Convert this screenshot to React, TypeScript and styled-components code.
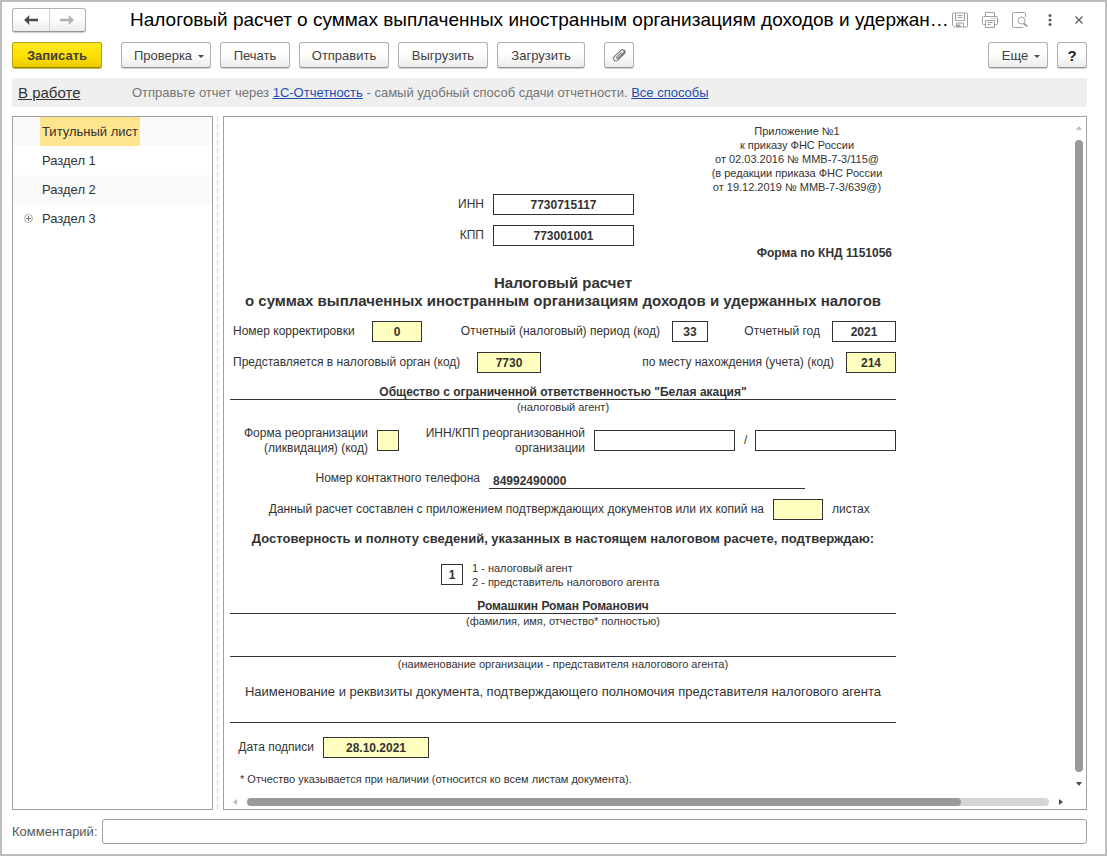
import React from "react";
import styled, { createGlobalStyle, css } from "styled-components";

const GlobalStyle = createGlobalStyle`
  *, *::before, *::after { box-sizing: border-box; }
  body {
    margin: 0;
    background: #fff;
    color: #333;
    font: 13px/15px "Liberation Sans", Arial, sans-serif;
  }
  button, input { font: inherit; color: inherit; }
`;

const Window = styled.main`
  display: flex;
  flex-direction: column;
  min-height: 100vh;
  padding: 6px 18px 10px 10px;
  border: 2px solid #bdbdbd;
`;

/* ---------- title bar ---------- */

const TitleBar = styled.header`
  display: flex;
  align-items: center;
  height: 24px;
`;

const raised = css`
  border: 1px solid #b0b0b0;
  border-bottom-color: #959595;
  border-radius: 3px;
  background: linear-gradient(#fff 40%, #ececec);
  box-shadow: 0 1px 0 #d0d0d0;
`;

const History = styled.nav`
  ${raised}
  display: flex;
  width: 74px;
  height: 24px;
  flex: none;
`;

const HistoryButton = styled.button`
  flex: 1;
  display: grid;
  place-items: center;
  padding: 0;
  border: 0;
  background: none;
  color: #4a4a4a;
  & + & {
    border-left: 1px solid #cfcfcf;
  }
  &:disabled {
    color: #b0b0b0;
  }
`;

const Title = styled.h1`
  flex: 1;
  min-width: 0;
  margin: 0 0 0 44px;
  overflow: hidden;
  color: #000;
  font-size: 19px;
  line-height: 24px;
  font-weight: 400;
  white-space: nowrap;
`;

const TitleActions = styled.div`
  display: flex;
  flex: none;
  align-items: center;
  gap: 12px;
`;

const IconButton = styled.button<{ $dark?: boolean }>`
  display: grid;
  place-items: center;
  width: 18px;
  height: 18px;
  padding: 0;
  border: 0;
  background: none;
  color: ${(p) => (p.$dark ? "#5a5a5a" : "#a0a0a0")};
  &:last-child {
    width: 16px;
  }
`;

/* ---------- command bar ---------- */

const Toolbar = styled.div`
  display: flex;
  gap: 9px;
  margin-top: 10px;
`;

const ToolButton = styled.button<{ $width?: number; $primary?: boolean; $apart?: boolean }>`
  ${raised}
  display: flex;
  align-items: center;
  justify-content: center;
  gap: 6px;
  flex: none;
  width: ${(p) => p.$width ?? 90}px;
  height: 26px;
  padding: 0;
  margin-left: ${(p) => (p.$apart ? 10 : 0)}px;
  color: #404040;
  white-space: nowrap;
  ${(p) =>
    p.$primary &&
    css`
      border-color: #b8a000;
      border-bottom-color: #978300;
      background: linear-gradient(#ffe924, #ffe100 50%, #eccb00);
      box-shadow: 0 1px 0 #c9b84e;
      font-weight: 700;
    `}
`;

const Caret = styled.span`
  border: 3px solid transparent;
  border-top-color: #4a4a4a;
  border-bottom: 0;
  margin: 2px -6px 0 0;
`;

const Spacer = styled.div`
  flex: 1;
`;

const Help = styled.b`
  color: #222;
  font-size: 15px;
`;

/* ---------- status line ---------- */

const StatusBar = styled.div`
  display: flex;
  align-items: center;
  height: 29px;
  margin-top: 10px;
  padding: 0 6px;
  background: #efefef;
  color: #757575;
`;

const StatusLink = styled.a`
  width: 114px;
  color: #333;
  font-size: 15px;
  line-height: 17px;
`;

const Link = styled.a`
  color: #1c4fb0;
`;

/* ---------- panels ---------- */

const Panels = styled.div`
  display: flex;
  flex: 1;
  margin-top: 9px;
`;

const Tree = styled.ul`
  flex: none;
  width: 201px;
  margin: 0;
  padding: 0;
  border: 1px solid #a0a0a0;
  list-style: none;
`;

const TreeRow = styled.li`
  display: flex;
  align-items: center;
  height: 29px;
  &:nth-child(odd) {
    background: #fafafa;
  }
`;

const Twisty = styled.span`
  display: grid;
  place-items: center;
  width: 27px;
  padding-left: 4px;
`;

const Expander = styled.button`
  display: grid;
  padding: 0;
  border: 0;
  background: none;
`;

const TreeItem = styled.button<{ $active?: boolean }>`
  height: 29px;
  padding: 0 2px;
  border: 0;
  background: ${(p) => (p.$active ? "#ffe48e" : "none")};
`;

const Splitter = styled.div`
  flex: none;
  width: 10px;
  background: repeating-linear-gradient(#d4d4d4 0 5px, transparent 5px 8px) 4px 0 / 1px 100% no-repeat;
`;

const Document = styled.section`
  flex: 1;
  min-width: 0;
  display: grid;
  grid-template: 1fr auto / minmax(0, 1fr) auto;
  border: 1px solid #a0a0a0;
`;

const Viewport = styled.div`
  overflow: hidden;
  padding: 7px 6px 0;
`;

const ScrollBar = styled.div<{ $vertical?: boolean }>`
  display: flex;
  align-items: center;
  gap: 10px;
  ${(p) =>
    p.$vertical
      ? css`
          flex-direction: column;
          padding: 9px 3px 9px 10px;
        `
      : css`
          padding: 3px 2px 3px 9px;
        `}
`;

const Arrow = styled.button`
  display: grid;
  padding: 0;
  border: 0;
  background: none;
  color: #4a4a4a;
  &:disabled {
    color: #bdbdbd;
  }
`;

const Track = styled.div<{ $vertical?: boolean }>`
  flex: 1;
  border-radius: 4px;
  background: #d6d6d6;
  ${(p) => (p.$vertical ? "width: 8px;" : "height: 8px;")}
`;

const Thumb = styled.div<{ $vertical?: boolean }>`
  border-radius: 4px;
  background: #9a9a9a;
  ${(p) => (p.$vertical ? "width: 8px; height: 100%;" : "height: 8px; width: 89%;")}
`;

/* ---------- form sheet ---------- */

const Sheet = styled.form`
  display: flex;
  flex-direction: column;
  max-width: 666px;
  font-size: 12px;
`;

const Appendix = styled.p`
  width: 198px;
  margin: 0 0 0 auto;
  font-size: 11px;
  line-height: 14px;
  text-align: center;
`;

const Row = styled.div<{ $cols: string; $top?: number; $height?: number; $indent?: number }>`
  display: grid;
  grid-template-columns: ${(p) => p.$cols};
  align-items: center;
  min-height: ${(p) => p.$height ?? 21}px;
  margin-top: ${(p) => p.$top ?? 0}px;
  padding-left: ${(p) => p.$indent ?? 0}px;
`;

const Label = styled.label<{ $start?: boolean; $gap?: number }>`
  padding-${(p) => (p.$start ? "left" : "right")}: ${(p) => p.$gap ?? 9}px;
  text-align: ${(p) => (p.$start ? "left" : "right")};
  white-space: nowrap;
`;

const Notes = styled.div`
  padding-left: 9px;
  font-size: 11px;
  line-height: 14px;
`;

const Field = styled.input<{ $editable?: boolean }>`
  width: 100%;
  min-width: 0;
  height: 21px;
  padding: 0;
  border: 1px solid #333;
  border-radius: 0;
  background: ${(p) => (p.$editable ? "#ffffc0" : "#fff")};
  font-weight: 700;
  text-align: center;
`;

const LineField = styled.input<{ $top?: number; $start?: boolean }>`
  width: 100%;
  min-width: 0;
  height: 16px;
  margin: ${(p) => p.$top ?? 0}px 0 0;
  padding: 0 4px;
  border: 0;
  border-bottom: 1px solid #333;
  border-radius: 0;
  background: none;
  font-weight: 700;
  text-align: ${(p) => (p.$start ? "left" : "center")};
  align-self: end;
`;

const Caption = styled.label`
  font-size: 11px;
  line-height: 14px;
  text-align: center;
`;

const FormCode = styled.p`
  margin: 0;
  padding-right: 4px;
  font-weight: 700;
  text-align: right;
`;

const Heading = styled.h2`
  margin: 13px 0 0;
  font-size: 15px;
  line-height: 18px;
  text-align: center;
`;

const Subheading = styled.h3`
  margin: 10px 0 0;
  font-size: 13px;
  line-height: 18px;
  text-align: center;
`;

const Paragraph = styled.label`
  margin-top: 12px;
  font-size: 13px;
  line-height: 18px;
  text-align: center;
`;

const Footnote = styled.p`
  margin: 14px 0 0;
  padding-left: 10px;
  font-size: 11px;
  line-height: 14px;
`;

/* ---------- comment ---------- */

const CommentRow = styled.div`
  display: flex;
  align-items: center;
  gap: 4px;
  margin-top: 9px;
  color: #555;
`;

const CommentInput = styled.input`
  flex: 1;
  min-width: 0;
  height: 25px;
  padding: 0 6px;
  border: 1px solid #a0a0a0;
  border-radius: 3px;
`;

/* ---------- drawings ---------- */

const ArrowLeft = () => (
  <svg width="14" height="10" viewBox="0 0 14 10" fill="currentColor">
    <path d="M0 5 5.500 0 5 3.700H14v2.600H5l.5 3.700z" />
  </svg>
);

const ArrowRight = () => (
  <svg width="14" height="10" viewBox="0 0 14 10" fill="currentColor">
    <path d="M14 5 8.500 0 9 3.700H0v2.600h9L8.500 10z" />
  </svg>
);

const SaveIcon = () => (
  <svg width="16" height="16" viewBox="0 0 16 16" fill="none" stroke="currentColor">
    <path d="M1.500.5h13a1 1 0 0 1 1 1v12a1 1 0 0 1-1 1h-12l-2-2v-11a1 1 0 0 1 1-1z" transform="translate(0 .5)" />
    <path d="M3.500 1v7.500h9V1M5.500 3.500h5M5.500 5.500h5M4.500 15v-4h7v4" />
    <path d="M5 12.500h3.500V15H5z" fill="currentColor" stroke="none" />
  </svg>
);

const PrintIcon = () => (
  <svg width="16" height="16" viewBox="0 0 16 16" fill="none" stroke="currentColor">
    <path d="M3.500 4.500v-4h9v4M3.500 12.500h-2a1 1 0 0 1-1-1v-6a1 1 0 0 1 1-1h13a1 1 0 0 1 1 1v6a1 1 0 0 1-1 1h-2" />
    <path d="M3.500 8.500h9v7h-9zM5.500 10.500h5M5.500 12.500h3M9.500 6.500h1M12 6.500h1.500" />
  </svg>
);

const PreviewIcon = () => (
  <svg width="16" height="16" viewBox="0 0 16 16" fill="none" stroke="currentColor">
    <path d="M13.500 5V1.500a1 1 0 0 0-1-1h-11a1 1 0 0 0-1 1v13a1 1 0 0 0 1 1H11" />
    <circle cx="9.500" cy="8.500" r="3.500" />
    <path d="m12 11.500 3 3" strokeWidth="2" />
  </svg>
);

const DotsIcon = () => (
  <svg width="4" height="12" viewBox="0 0 4 12" fill="currentColor">
    <circle cx="2" cy="1.500" r="1.500" />
    <circle cx="2" cy="6" r="1.500" />
    <circle cx="2" cy="10.500" r="1.500" />
  </svg>
);

const CloseIcon = () => (
  <svg width="8" height="8" viewBox="0 0 8 8" stroke="currentColor" strokeWidth="1.200">
    <path d="m.5.5 7 7m0-7-7 7" />
  </svg>
);

const ClipIcon = () => (
  <svg width="14" height="14" viewBox="0 0 14 14" fill="none" stroke="#777" strokeWidth="1.100" strokeLinecap="round">
    <path d="M9.300 4.600 5 8.900c-.9 1 .3 2.100 1.200 1.200l5.200-5.100c1.900-1.900-.7-4.600-2.700-2.700L2.300 8.600c-2.400 2.400 1 5.900 3.500 3.500l6.700-6.500c.8-1 .8-2.300.2-3.200" />
  </svg>
);

const PlusIcon = () => (
  <svg width="9" height="9" viewBox="0 0 9 9" fill="none">
    <circle cx="4.500" cy="4.500" r="4" stroke="#aaa" />
    <path d="M2 4.500h5M4.500 2v5" stroke="#777" />
  </svg>
);

const Triangle = ({ d, w, h }: { d: string; w: number; h: number }) => (
  <svg width={w} height={h} viewBox={`0 0 ${w} ${h}`} fill="currentColor">
    <path d={d} />
  </svg>
);

/* ---------- page ---------- */

const sections = ["Титульный лист", "Раздел 1", "Раздел 2", "Раздел 3"];

export default function App() {
  return (
    <>
      <GlobalStyle />
      <Window>
        <TitleBar>
          <History aria-label="История">
            <HistoryButton aria-label="Назад"><ArrowLeft /></HistoryButton>
            <HistoryButton aria-label="Вперед" disabled><ArrowRight /></HistoryButton>
          </History>
          <Title>Налоговый расчет о суммах выплаченных иностранным организациям доходов и удержан…</Title>
          <TitleActions>
            <IconButton aria-label="Сохранить"><SaveIcon /></IconButton>
            <IconButton aria-label="Напечатать"><PrintIcon /></IconButton>
            <IconButton aria-label="Просмотр"><PreviewIcon /></IconButton>
            <IconButton aria-label="Меню" $dark><DotsIcon /></IconButton>
            <IconButton aria-label="Закрыть" $dark><CloseIcon /></IconButton>
          </TitleActions>
        </TitleBar>

        <Toolbar>
          <ToolButton $primary>Записать</ToolButton>
          <ToolButton $apart>Проверка<Caret /></ToolButton>
          <ToolButton $width={70}>Печать</ToolButton>
          <ToolButton>Отправить</ToolButton>
          <ToolButton>Выгрузить</ToolButton>
          <ToolButton $width={88}>Загрузить</ToolButton>
          <ToolButton $width={30} $apart aria-label="Файлы"><ClipIcon /></ToolButton>
          <Spacer />
          <ToolButton $width={60}>Еще<Caret /></ToolButton>
          <ToolButton $width={30}><Help>?</Help></ToolButton>
        </Toolbar>

        <StatusBar>
          <StatusLink href="#status">В работе</StatusLink>
          <span>
            Отправьте отчет через <Link href="#service">1С-Отчетность</Link> - самый удобный способ сдачи
            отчетности. <Link href="#all">Все способы</Link>
          </span>
        </StatusBar>

        <Panels>
          <Tree>
            {sections.map((name, i) => (
              <TreeRow key={name}>
                <Twisty>
                  {i === 3 && <Expander aria-label="Развернуть"><PlusIcon /></Expander>}
                </Twisty>
                <TreeItem $active={i === 0}>{name}</TreeItem>
              </TreeRow>
            ))}
          </Tree>
          <Splitter />
          <Document>
            <Viewport>
              <Sheet>
                <Appendix>
                  Приложение №1<br />
                  к приказу ФНС России<br />
                  от 02.03.2016 № ММВ-7-3/115@<br />
                  (в редакции приказа ФНС России<br />
                  от 19.12.2019 № ММВ-7-3/639@)
                </Appendix>
                <Row $cols="263px 141px">
                  <Label htmlFor="inn">ИНН</Label>
                  <Field id="inn" defaultValue="7730715117" />
                </Row>
                <Row $cols="263px 141px" $top={10}>
                  <Label htmlFor="kpp">КПП</Label>
                  <Field id="kpp" defaultValue="773001001" />
                </Row>
                <FormCode>Форма по КНД 1151056</FormCode>
                <Heading>
                  Налоговый расчет<br />
                  о суммах выплаченных иностранным организациям доходов и удержанных налогов
                </Heading>
                <Row $cols="139px 50px 1fr 36px 124px 64px" $top={11} $indent={3}>
                  <Label htmlFor="corr" $start $gap={0}>Номер корректировки</Label>
                  <Field id="corr" $editable defaultValue="0" />
                  <Label htmlFor="period" $gap={12}>Отчетный (налоговый) период (код)</Label>
                  <Field id="period" defaultValue="33" />
                  <Label htmlFor="year" $gap={12}>Отчетный год</Label>
                  <Field id="year" defaultValue="2021" />
                </Row>
                <Row $cols="244px 64px 1fr 50px" $top={10} $indent={3}>
                  <Label htmlFor="office" $start $gap={0}>Представляется в налоговый орган (код)</Label>
                  <Field id="office" $editable defaultValue="7730" />
                  <Label htmlFor="place" $gap={12}>по месту нахождения (учета) (код)</Label>
                  <Field id="place" $editable defaultValue="214" />
                </Row>
                <LineField
                  id="agent"
                  $top={11}
                  defaultValue={'Общество с ограниченной ответственностью "Белая акация"'}
                />
                <Caption htmlFor="agent">(налоговый агент)</Caption>
                <Row $cols="147px 22px 1fr 141px 20px 141px" $top={11} $height={31}>
                  <Label htmlFor="reorg">Форма реорганизации<br />(ликвидация) (код)</Label>
                  <Field id="reorg" $editable />
                  <Label htmlFor="reorgInn">ИНН/КПП реорганизованной<br />организации</Label>
                  <Field id="reorgInn" />
                  <Label htmlFor="reorgKpp" $start>/</Label>
                  <Field id="reorgKpp" />
                </Row>
                <Row $cols="259px 316px" $top={12}>
                  <Label htmlFor="phone">Номер контактного телефона</Label>
                  <LineField id="phone" $start defaultValue="84992490000" />
                </Row>
                <Row $cols="543px 50px 1fr" $top={10}>
                  <Label htmlFor="pages">
                    Данный расчет составлен с приложением подтверждающих документов или их копий на
                  </Label>
                  <Field id="pages" $editable />
                  <Label htmlFor="pages" $start>листах</Label>
                </Row>
                <Subheading>
                  Достоверность и полноту сведений, указанных в настоящем налоговом расчете, подтверждаю:
                </Subheading>
                <Row $cols="22px 1fr" $top={12} $height={29} $indent={211}>
                  <Field id="signer" aria-label="Кто подтверждает" defaultValue="1" />
                  <Notes>1 - налоговый агент<br />2 - представитель налогового агента</Notes>
                </Row>
                <LineField id="fio" $top={9} defaultValue="Ромашкин Роман Романович" />
                <Caption htmlFor="fio">(фамилия, имя, отчество* полностью)</Caption>
                <LineField id="org" $top={13} />
                <Caption htmlFor="org">(наименование организации - представителя налогового агента)</Caption>
                <Paragraph htmlFor="proof">
                  Наименование и реквизиты документа, подтверждающего полномочия представителя налогового агента
                </Paragraph>
                <LineField id="proof" $top={6} />
                <Row $cols="93px 106px" $top={14}>
                  <Label htmlFor="date" $gap={9}>Дата подписи</Label>
                  <Field id="date" $editable defaultValue="28.10.2021" />
                </Row>
                <Footnote>* Отчество указывается при наличии (относится ко всем листам документа).</Footnote>
              </Sheet>
            </Viewport>
            <ScrollBar $vertical>
              <Arrow aria-label="Вверх" disabled><Triangle w={6} h={4} d="M0 4h6L3 0z" /></Arrow>
              <Track $vertical><Thumb $vertical /></Track>
              <Arrow aria-label="Вниз"><Triangle w={6} h={4} d="M0 0h6L3 4z" /></Arrow>
            </ScrollBar>
            <ScrollBar>
              <Arrow aria-label="Влево" disabled><Triangle w={4} h={6} d="M4 0v6L0 3z" /></Arrow>
              <Track><Thumb /></Track>
              <Arrow aria-label="Вправо"><Triangle w={4} h={6} d="M0 0v6l4-3z" /></Arrow>
            </ScrollBar>
          </Document>
        </Panels>

        <CommentRow>
          <label htmlFor="comment">Комментарий:</label>
          <CommentInput id="comment" />
        </CommentRow>
      </Window>
    </>
  );
}
